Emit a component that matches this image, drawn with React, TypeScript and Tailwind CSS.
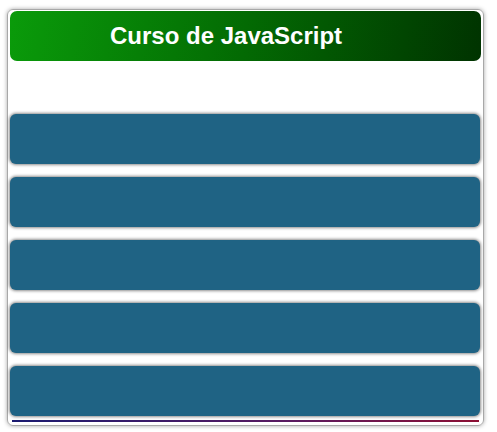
export default function App() {
  const bars = [0, 1, 2, 3, 4];
  return (
    <div className="w-[497px] h-[432px] bg-white pt-[9px] pl-[7px]" style={{ fontFamily: '"Liberation Sans", Arial, sans-serif' }}>
      <div className="w-[477px] h-[417px] border border-[#a8a8a8] rounded-[6px] shadow-[0_0_4px_rgba(0,0,0,0.35)] px-[2px] pt-[1px] flex flex-col">
        <div className="h-[50px] rounded-[7px] bg-[linear-gradient(100deg,#0a9b0a,#036a03_50%,#003300)] flex items-center pl-[100px]">
          <span className="text-white font-bold text-[24px] leading-none">Curso de JavaScript</span>
        </div>
        <div className="h-[53px]" />
        <div className="flex flex-col gap-[13px]">
          {bars.map((b) => (
            <div
              key={b}
              className="h-[50px] rounded-[6px] bg-[#1f6384] shadow-[0_0_3px_1px_rgba(0,0,0,0.45)] mr-[1px]"
            />
          ))}
        </div>
        <div className="mt-[4px] mx-[2px] h-[2px] bg-[linear-gradient(to_right,#1a1a70,#5a1a60_60%,#8c0f33)]" />
      </div>
    </div>
  );
}
